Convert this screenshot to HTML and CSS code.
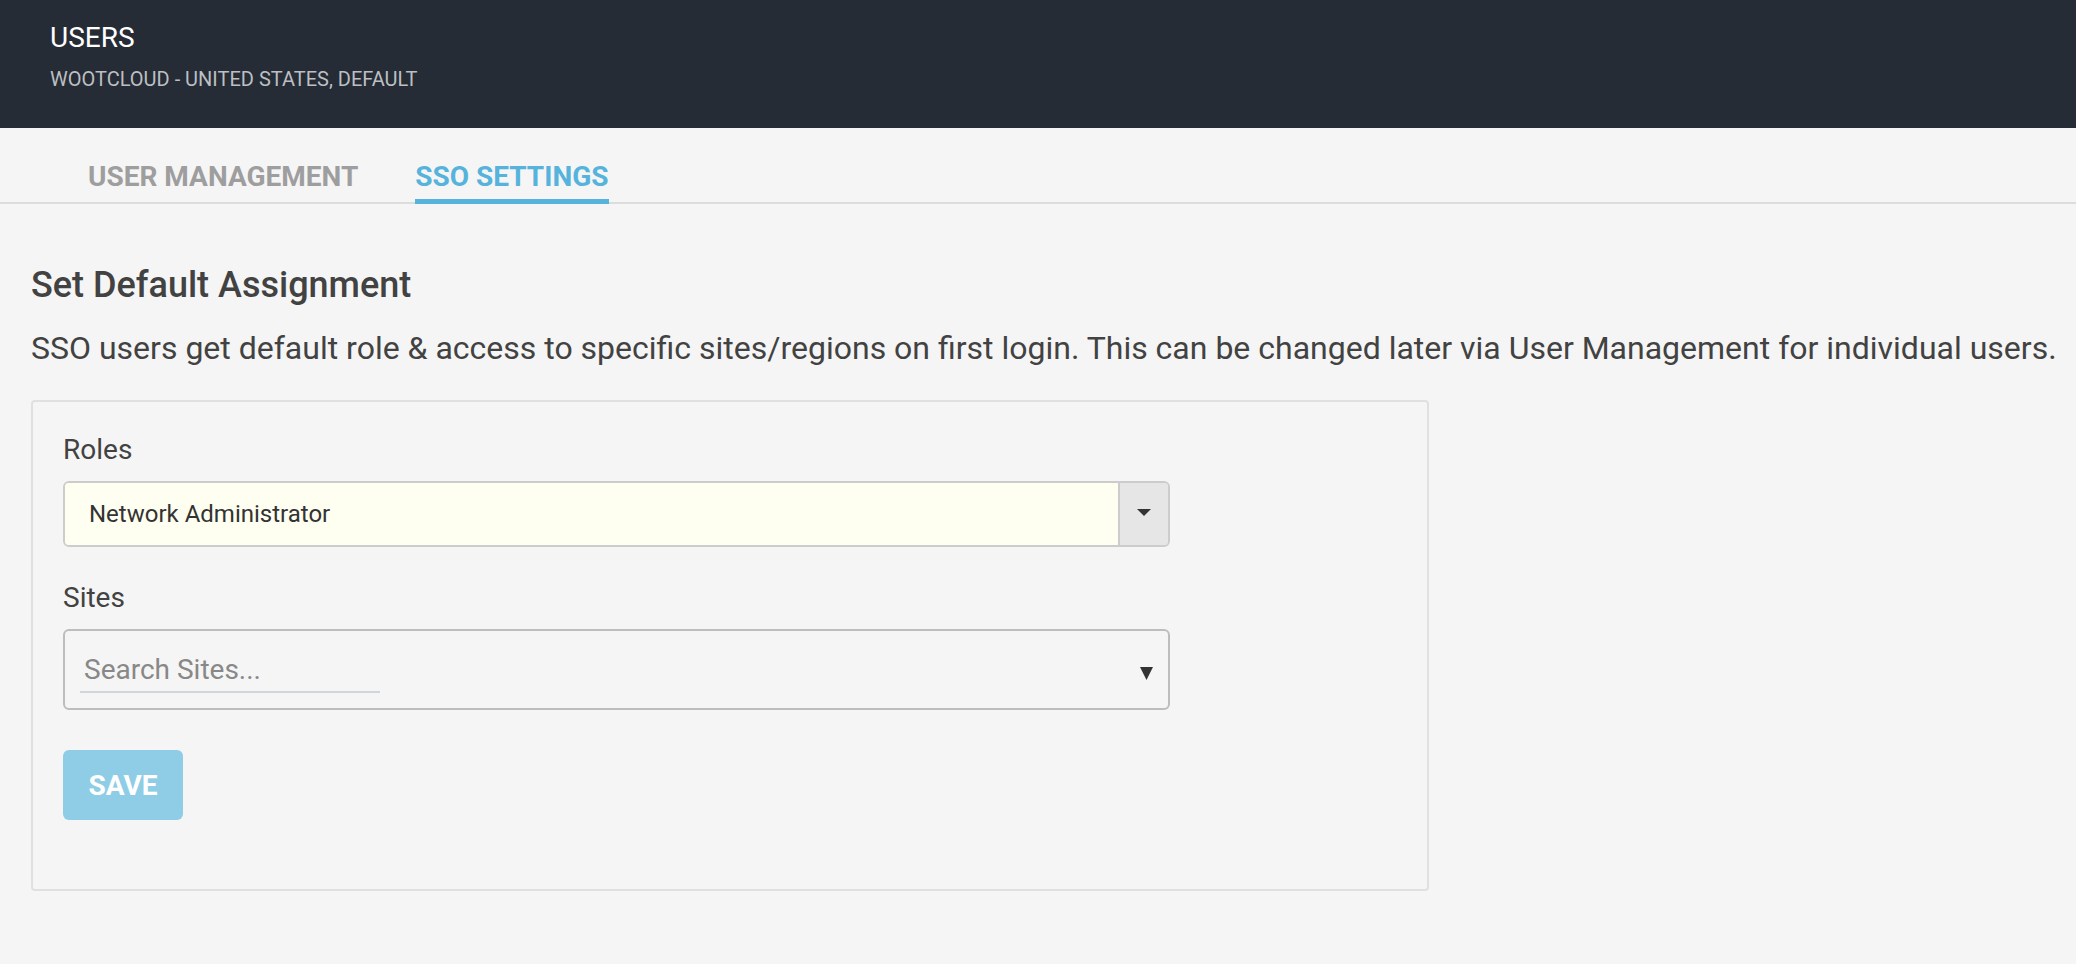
FILE: index.html
```html
<!DOCTYPE html>
<html lang="en">
<head>
<meta charset="utf-8">
<title>Users - SSO Settings</title>
<link rel="stylesheet" href="styles.css">
</head>
<body>
<header class="page-header">
  <div class="page-title">USERS</div>
  <div class="page-subtitle">WOOTCLOUD - UNITED STATES, DEFAULT</div>
</header>
<nav class="tabs">
  <a class="tab">USER MANAGEMENT</a>
  <a class="tab tab-active">SSO SETTINGS</a>
</nav>
<main class="content">
  <h2 class="section-title">Set Default Assignment</h2>
  <p class="section-desc">SSO users get default role &amp; access to specific sites/regions on first login. This can be changed later via User Management for individual users.</p>
  <div class="card">
    <div class="field">
      <label class="field-label">Roles</label>
      <div class="select">
        <div class="select-value">Network Administrator</div>
        <div class="select-btn">
          <svg class="caret" width="14" height="7" viewBox="0 0 14 7"><polygon points="0,0 14,0 7,7" fill="#333"/></svg>
        </div>
      </div>
    </div>
    <div class="field">
      <label class="field-label">Sites</label>
      <div class="multi">
        <input class="multi-input" type="text" placeholder="Search Sites...">
        <svg class="multi-arrow" width="13" height="13" viewBox="0 0 13 13"><polygon points="0,0 13,0 6.5,13" fill="#333"/></svg>
      </div>
    </div>
    <div class="card-actions">
      <button class="btn-save" type="button">SAVE</button>
    </div>
  </div>
</main>
</body>
</html>
```

FILE: styles.css
```css
* { box-sizing: border-box; }

html, body {
  margin: 0;
  padding: 0;
  background: #f5f5f5;
  font-family: Roboto, "Liberation Sans", Arial, sans-serif;
}

.page-header {
  height: 128px;
  background: #262c35;
  padding: 21px 0 0 50px;
}

.page-title {
  color: #ffffff;
  font-size: 28px;
  line-height: 34px;
  font-weight: 400;
}

.page-subtitle {
  margin-top: 12px;
  color: #bcbfc3;
  font-size: 20px;
  line-height: 24px;
}

.tabs {
  display: flex;
  gap: 57px;
  padding: 33px 0 0 88px;
  border-bottom: 2px solid #dcdcdc;
}

.tab {
  display: block;
  font-size: 28px;
  line-height: 32px;
  font-weight: 700;
  color: #9e9e9e;
  padding-bottom: 6px;
  border-bottom: 5px solid transparent;
  margin-bottom: -2px;
  cursor: pointer;
}

.tab-active {
  color: #56b3db;
  border-bottom-color: #56b3db;
}

.content {
  padding: 61px 0 0 31px;
}

.section-title {
  margin: 0;
  font-size: 36px;
  line-height: 40px;
  font-weight: 500;
  color: #424242;
}

.section-desc {
  margin: 24px 0 0 0;
  font-size: 32px;
  line-height: 38px;
  color: #424242;
  white-space: nowrap;
}

.card {
  margin-top: 33px;
  width: 1398px;
  border: 2px solid #e0e0e0;
  border-radius: 4px;
  padding: 31px 30px 69px 30px;
}

.field {
  margin-bottom: 34px;
}

.field-label {
  display: block;
  font-size: 28px;
  line-height: 34px;
  color: #424242;
  margin-bottom: 14px;
}

.select {
  display: flex;
  width: 1107px;
  height: 66px;
  border: 2px solid #cccccc;
  border-radius: 6px;
  overflow: hidden;
}

.select-value {
  flex: 1;
  display: flex;
  align-items: center;
  padding-left: 24px;
  background: #fefff0;
  font-size: 24px;
  color: #333333;
}

.select-btn {
  width: 50px;
  display: flex;
  align-items: center;
  justify-content: center;
  background: #e6e6e6;
  border-left: 2px solid #cccccc;
}

.caret {
  display: block;
  margin-top: -3px;
}

.multi {
  display: flex;
  align-items: center;
  justify-content: space-between;
  width: 1107px;
  height: 81px;
  border: 2px solid #bdbdbd;
  border-radius: 6px;
  padding: 22px 15px 15px 15px;
}

.multi-input {
  width: 300px;
  height: 40px;
  border: none;
  border-bottom: 2px solid #d1d6db;
  background: transparent;
  padding: 0 0 6px 4px;
  font-family: Roboto, "Liberation Sans", Arial, sans-serif;
  font-size: 28px;
  line-height: 32px;
  color: #333;
  outline: none;
}

.multi-input::placeholder {
  color: #888888;
}

.multi-arrow {
  display: block;
}

.card-actions {
  padding-top: 6px;
}

.btn-save {
  display: block;
  width: 120px;
  height: 70px;
  border: none;
  border-radius: 6px;
  background: #8fcde6;
  color: #ffffff;
  font-family: Roboto, "Liberation Sans", Arial, sans-serif;
  font-size: 28px;
  font-weight: 700;
  padding: 0;
  cursor: pointer;
}
```
